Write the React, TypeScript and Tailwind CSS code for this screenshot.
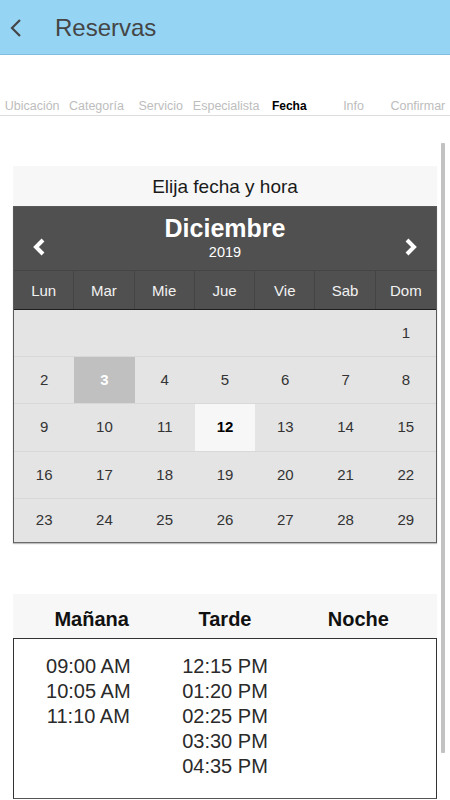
import React from 'react'

const tabs = ['Ubicación', 'Categoría', 'Servicio', 'Especialista', 'Fecha', 'Info', 'Confirmar']
const weekdays = ['Lun', 'Mar', 'Mie', 'Jue', 'Vie', 'Sab', 'Dom']

const weeks: (number | null)[][] = [
  [null, null, null, null, null, null, 1],
  [2, 3, 4, 5, 6, 7, 8],
  [9, 10, 11, 12, 13, 14, 15],
  [16, 17, 18, 19, 20, 21, 22],
  [23, 24, 25, 26, 27, 28, 29],
]

const rowHeights = ['h-[47px]', 'h-[47px]', 'h-[48px]', 'h-[47px]', 'h-[43px]']

const morning = ['09:00 AM', '10:05 AM', '11:10 AM']
const afternoon = ['12:15 PM', '01:20 PM', '02:25 PM', '03:30 PM', '04:35 PM']

function Chevron({ dir }: { dir: 'left' | 'right' }) {
  return (
    <svg width="14" height="20" viewBox="0 0 14 20">
      <polyline
        points={dir === 'left' ? '11,3 4,10 11,17' : '3,3 10,10 3,17'}
        fill="none"
        stroke="white"
        strokeWidth="4"
        strokeLinejoin="miter"
      />
    </svg>
  )
}

export default function App() {
  return (
    <div className="relative w-[450px] h-[800px] overflow-hidden bg-white font-['Liberation_Sans',Arial,sans-serif]">
      {/* Header */}
      <div className="h-[55px] bg-[#95d4f3] border-b border-[#80bfe0] flex items-center">
        <svg width="14" height="18" viewBox="0 0 14 18" className="ml-[9px] mt-[1px]">
          <polyline points="11,1 3,9 11,17" fill="none" stroke="#454545" strokeWidth="2.2" />
        </svg>
        <span className="ml-[32px] mt-[2px] text-[24px] text-[#454545] leading-none">Reservas</span>
      </div>

      {/* Steps */}
      <div className="mt-[40px] h-[21px] grid grid-cols-7 border-b border-[#dddddd]">
        {tabs.map((t) => (
          <div
            key={t}
            className={
              t === 'Fecha'
                ? 'pt-[1px] text-center text-[12px] leading-[20px] font-bold text-black whitespace-nowrap'
                : 'pt-[1px] text-center text-[12.5px] leading-[20px] text-[#bdbdbd] whitespace-nowrap'
            }
          >
            {t}
          </div>
        ))}
      </div>

      {/* Calendar card */}
      <div className="mx-[13px] mt-[50px]">
        <div className="h-[40px] pt-[3px] bg-[#f7f7f7] flex items-center justify-center text-[19px] text-[#1a1a1a]">
          Elija fecha y hora
        </div>
        <div className="border border-[#5a5a5a] border-b-[#6a6a6a] shadow-[0_1px_1px_rgba(0,0,0,0.25)]">
          <div className="h-[63px] bg-[#505050] flex items-start justify-between px-[18px] pt-[7px]">
            <div className="mt-[23px]">
              <Chevron dir="left" />
            </div>
            <div className="flex flex-col items-center text-white">
              <span className="text-[25px] font-bold leading-[28px]">Diciembre</span>
              <span className="text-[14.5px] leading-[16px] mt-[2px]">2019</span>
            </div>
            <div className="mt-[23px]">
              <Chevron dir="right" />
            </div>
          </div>
          <div className="h-[40px] bg-[#505050] grid grid-cols-7 border-t border-[#454545] border-b border-b-[#1e1e1e]">
            {weekdays.map((d, i) => (
              <div
                key={d}
                className={
                  'flex items-center justify-center pt-[3px] text-[15px] text-[#f2f2f2] ' +
                  (i < 6 ? 'border-r border-[#444444]' : '')
                }
              >
                {d}
              </div>
            ))}
          </div>
          <div className="bg-[#e4e4e4]">
            {weeks.map((w, r) => (
              <div
                key={r}
                className={
                  'grid grid-cols-7 ' + rowHeights[r] + (r < 4 ? ' border-b border-[#d8d8d8]' : '')
                }
              >
                {w.map((n, i) => (
                  <div
                    key={i}
                    className={
                      'flex items-center justify-center text-[15px] ' +
                      (n === 3
                        ? 'bg-[#c0c0c0] text-white font-bold'
                        : n === 12
                          ? 'bg-[#f7f7f7] text-black font-bold'
                          : 'text-[#333333]')
                    }
                  >
                    {n ?? ''}
                  </div>
                ))}
              </div>
            ))}
          </div>
        </div>

        {/* Times */}
        <div className="mt-[51px]">
          <div className="h-[44px] pt-[6px] bg-[#f7f7f7] grid grid-cols-3 px-[12px] items-center text-[20px] font-bold text-[#111111]">
            <div className="text-center">Mañana</div>
            <div className="text-center">Tarde</div>
            <div className="text-center">Noche</div>
          </div>
          <div className="h-[161px] border border-[#333333] border-b-[#555555] grid grid-cols-3 px-[12px] pt-[15px] text-[20px] leading-[25px] text-[#2a2a2a]">
            <div className="flex flex-col items-center pr-[8px]">
              {morning.map((t) => (
                <span key={t}>{t}</span>
              ))}
            </div>
            <div className="flex flex-col items-center">
              {afternoon.map((t) => (
                <span key={t}>{t}</span>
              ))}
            </div>
            <div />
          </div>
        </div>
      </div>

      {/* Scrollbar */}
      <div className="absolute left-[441px] top-[143px] w-[4px] h-[610px] bg-[#c2c2c2] rounded-[1px]" />
    </div>
  )
}
